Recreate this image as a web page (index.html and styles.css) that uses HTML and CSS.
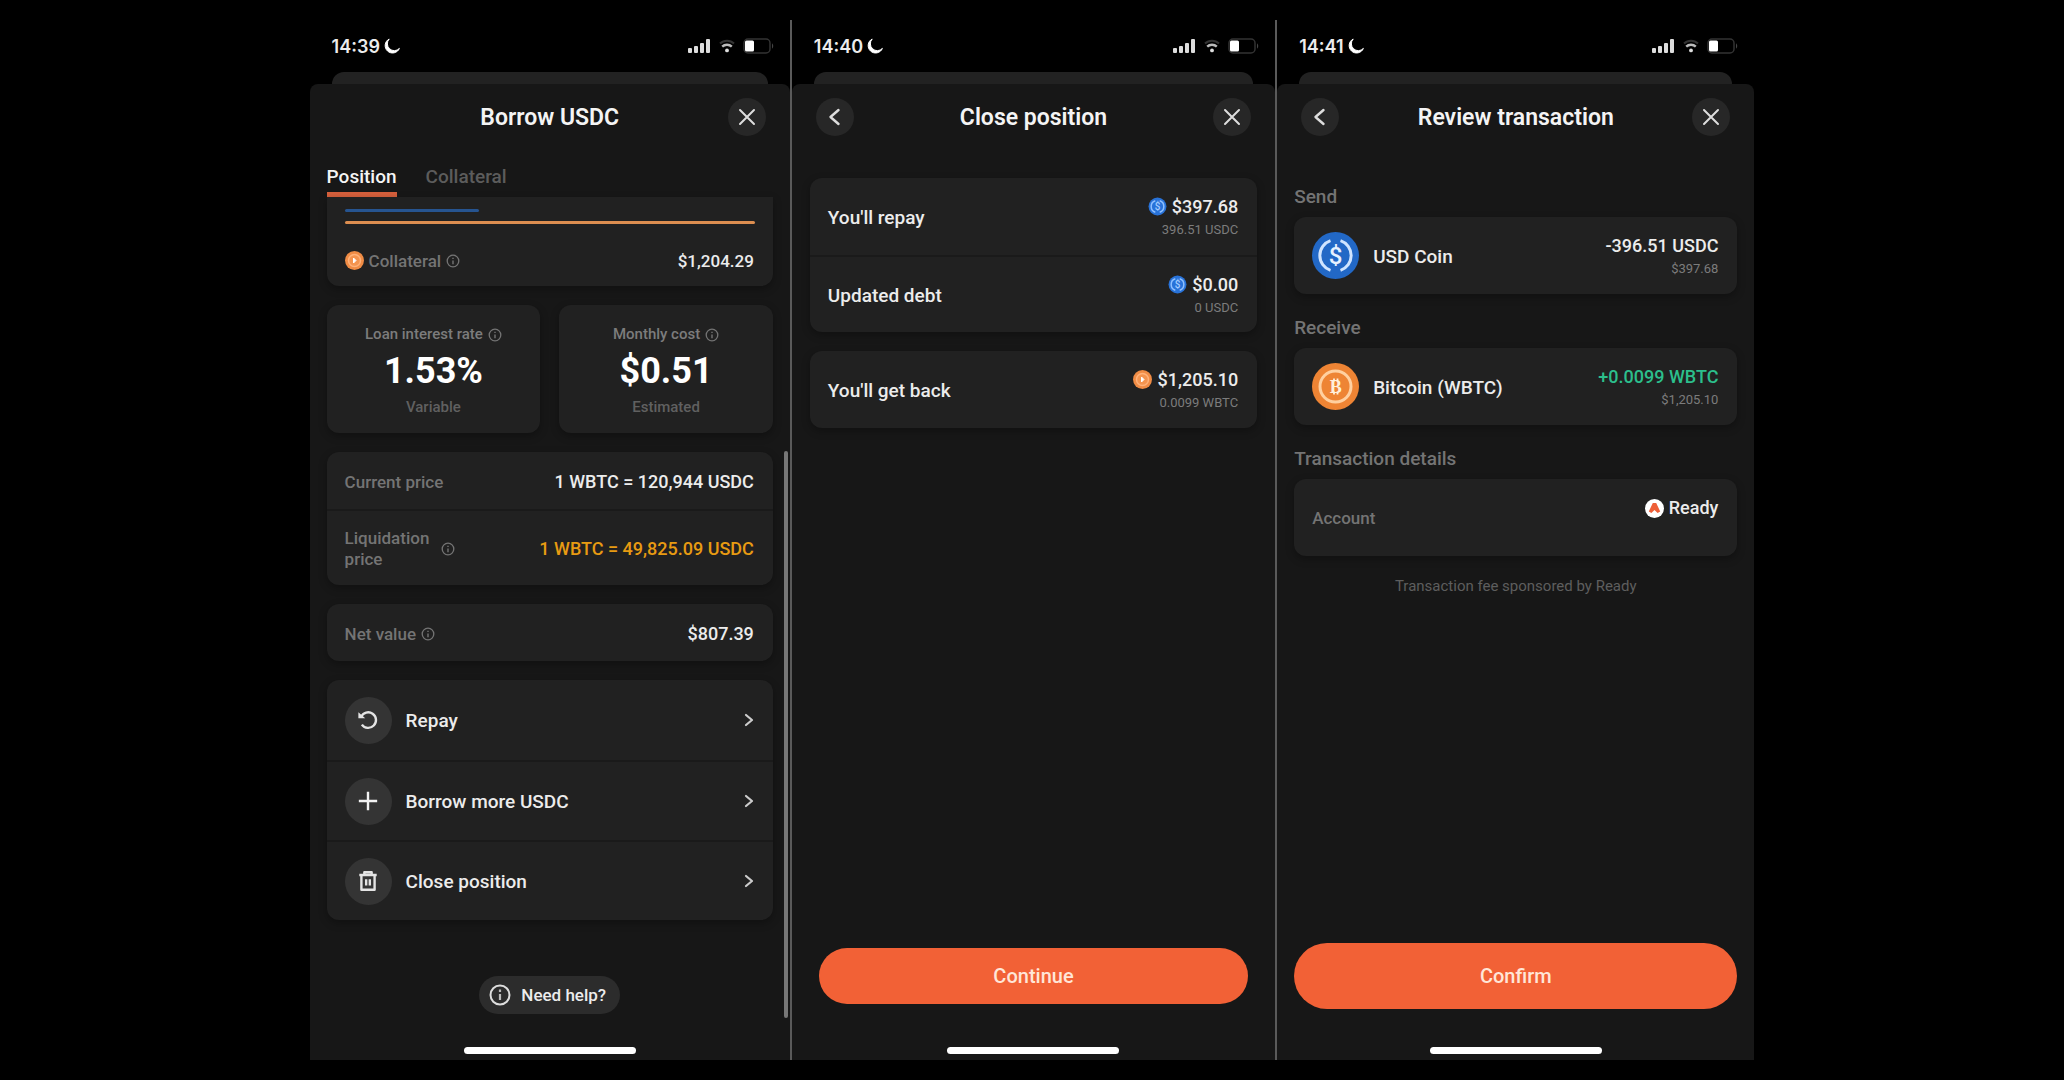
FILE: index.html
```
<!DOCTYPE html>
<html lang="en">
<head>
    <meta charset="UTF-8">
    <meta name="viewport" content="width=device-width, initial-scale=1.0">
    <title>Borrow USDC</title>
    <link rel="stylesheet" href="styles.css">
</head>
<body>
    <!-- Shared icons -->
    <svg class="sprite" aria-hidden="true">
        <symbol id="moon" viewBox="0 0 16 16">
            <path d="M5.2 1A7.4 7.4 0 1 0 15.4 10.400 5.800 5.800 0 0 1 5.200 1z" fill="#fff" stroke="#fff" stroke-width="1" stroke-linejoin="round"/>
        </symbol>
        <symbol id="signal" viewBox="0 0 23 14">
            <g fill="#ddd">
                <rect x="0" y="9" width="4" height="5" rx="1"/>
                <rect x="6" y="7" width="4" height="7" rx="1"/>
                <rect x="12" y="4" width="4" height="10" rx="1"/>
                <rect x="18" y="0" width="4" height="14" rx="1"/>
            </g>
        </symbol>
        <symbol id="wifi" viewBox="0 0 16 14">
            <path d="M1 4.5a10 10 0 0 1 14 0" fill="none" stroke="#333" stroke-width="2"/>
            <path d="M3.2 7.6a7 7 0 0 1 9.6 0" fill="none" stroke="#bbb" stroke-width="2.4"/>
            <circle cx="8" cy="11.4" r="1.9" fill="#ddd"/>
        </symbol>
        <symbol id="battery" viewBox="0 0 31 16">
            <rect x="1" y="1" width="26" height="14" rx="4" fill="none" stroke="#333" stroke-width="1.5"/>
            <path d="M29 5.5c1.6.6 1.6 4.4 0 5z" fill="#444"/>
            <rect x="2" y="2.5" width="9" height="11" rx="1.5" fill="#fff"/>
        </symbol>
        <symbol id="close" viewBox="0 0 18 18">
            <path d="M2 2l14 14M16 2L2 16" fill="none" stroke="#ddd" stroke-width="2" stroke-linecap="round"/>
        </symbol>
        <symbol id="back" viewBox="0 0 18 18">
            <path d="M12.5 2L4.5 9l8 7" fill="none" stroke="#ddd" stroke-width="2.4" stroke-linecap="round" stroke-linejoin="round"/>
        </symbol>
        <symbol id="chevron" viewBox="0 0 10 14">
            <path d="M2 2l6 5-6 5" fill="none" stroke="#ccc" stroke-width="2.2" stroke-linecap="round" stroke-linejoin="round"/>
        </symbol>
        <symbol id="info" viewBox="0 0 14 14">
            <circle cx="7" cy="7" r="5.8" fill="none" stroke="currentColor" stroke-width="1.3"/>
            <path d="M7 6.4v3.8M7 3.8v1.3" stroke="currentColor" stroke-width="1.4"/>
        </symbol>
        <symbol id="usdc" viewBox="0 0 47 47">
            <circle cx="23.5" cy="23.5" r="23.5" fill="#2268c6"/>
            <path d="M18.5 8.700a15.600 15.600 0 0 0 0 29.600M28.500 8.700a15.600 15.600 0 0 1 0 29.600" fill="none" stroke="#cfe4ff" stroke-width="3"/>
            <text x="23.5" y="32" class="coin-sign" font-size="24" fill="#e6f2ff">$</text>
        </symbol>
        <symbol id="usdc-small" viewBox="0 0 19 19">
            <circle cx="9.5" cy="9.5" r="9" fill="#2872d8"/>
            <path d="M7.3 3.800a6 6 0 0 0 0 11.400M11.700 3.800a6 6 0 0 1 0 11.400" fill="none" stroke="#8fc0ff" stroke-width="1.5"/>
            <text x="9.5" y="13" class="coin-sign" font-size="10" fill="#a5ccff">$</text>
        </symbol>
        <symbol id="wbtc" viewBox="0 0 47 47">
            <circle cx="23.5" cy="23.5" r="23.5" fill="#ee8434"/>
            <circle cx="23.5" cy="23.5" r="15.5" fill="none" stroke="#ffd0a0" stroke-width="3"/>
            <path d="M22 15.500v3M25.500 15.500v3M22 28.500v3M25.500 28.500v3" stroke="#fff0dc" stroke-width="1.8"/>
            <text x="23.7" y="29.5" class="coin-sign coin-serif" font-size="18" fill="#fff0dc">B</text>
        </symbol>
        <symbol id="wbtc-small" viewBox="0 0 19 19">
            <circle cx="9.5" cy="9.5" r="9.5" fill="#f08c45"/>
            <circle cx="9.5" cy="9.5" r="6" fill="#f4944f" stroke="#ffb27a" stroke-width="1.5"/>
            <path d="M8.500 7l2.500 2.500L8.500 12z" fill="#fff" stroke="#fff" stroke-width="1" stroke-linejoin="round"/>
        </symbol>
    </svg>

    <main class="screens">
        <!-- Position -->
        <section class="screen">
            <div class="status-bar">
                <span class="time">14:39</span>
                <svg class="moon"><use href="#moon"/></svg>
                <span class="status-icons">
                    <svg class="signal"><use href="#signal"/></svg>
                    <svg class="wifi"><use href="#wifi"/></svg>
                    <svg class="battery"><use href="#battery"/></svg>
                </span>
            </div>
            <div class="sheet-behind"></div>
            <div class="sheet">
                <header class="sheet-header">
                    <h2>Borrow USDC</h2>
                    <button class="round-btn close-btn" aria-label="Close"><svg><use href="#close"/></svg></button>
                </header>
                <nav class="tabs">
                    <button class="tab active">Position</button>
                    <button class="tab">Collateral</button>
                </nav>

                <div class="content">
                    <div class="card card-cut">
                        <div class="bar debt-bar"></div>
                        <div class="bar collateral-bar"></div>
                        <div class="row collateral-row">
                            <span class="label"><svg class="coin-small"><use href="#wbtc-small"/></svg>Collateral <svg class="info"><use href="#info"/></svg></span>
                            <span class="value small-value">$1,204.29</span>
                        </div>
                    </div>

                    <div class="stats">
                        <div class="card stat">
                            <span class="stat-label">Loan interest rate <svg class="info"><use href="#info"/></svg></span>
                            <strong>1.53%</strong>
                            <span class="stat-note">Variable</span>
                        </div>
                        <div class="card stat">
                            <span class="stat-label">Monthly cost <svg class="info"><use href="#info"/></svg></span>
                            <strong>$0.51</strong>
                            <span class="stat-note">Estimated</span>
                        </div>
                    </div>

                    <div class="card">
                        <div class="row price-row">
                            <span class="label">Current price</span>
                            <span class="value">1 WBTC = 120,944 USDC</span>
                        </div>
                        <div class="row price-row liquidation">
                            <span class="label"><span class="wrap-label">Liquidation price</span><svg class="info"><use href="#info"/></svg></span>
                            <span class="value warning">1 WBTC = 49,825.09 USDC</span>
                        </div>
                    </div>

                    <div class="card">
                        <div class="row price-row">
                            <span class="label">Net value <svg class="info"><use href="#info"/></svg></span>
                            <span class="value">$807.39</span>
                        </div>
                    </div>

                    <div class="card">
                        <button class="row action">
                            <span class="action-icon">
                                <svg viewBox="0 0 24 24"><path d="M4.500 8.500a8.500 8.500 0 1 1 .8 8.500" fill="none" stroke="#e4e4e4" stroke-width="2.6"/><path d="M1.500 3.500l7.500 6.500H1.500z" fill="#e4e4e4"/></svg>
                            </span>
                            <span>Repay</span>
                            <svg class="chevron"><use href="#chevron"/></svg>
                        </button>
                        <button class="row action">
                            <span class="action-icon">
                                <svg viewBox="0 0 24 24"><path d="M12 2v20M2 12h20" stroke="#f2f2f2" stroke-width="2.6"/></svg>
                            </span>
                            <span>Borrow more USDC</span>
                            <svg class="chevron"><use href="#chevron"/></svg>
                        </button>
                        <button class="row action">
                            <span class="action-icon">
                                <svg viewBox="0 0 24 24"><path d="M2.500 5.500h19M8 5V2.500h8V5M4.800 6v15.500h14.400V6M10 10v7M14 10v7" fill="none" stroke="#e4e4e4" stroke-width="2.6" stroke-linejoin="round"/></svg>
                            </span>
                            <span>Close position</span>
                            <svg class="chevron"><use href="#chevron"/></svg>
                        </button>
                    </div>
                </div>

                <div class="scrollbar"></div>
                <div class="sheet-footer help-footer">
                    <button class="help-btn"><svg viewBox="0 0 22 22"><circle cx="11" cy="11" r="9.5" fill="none" stroke="#ddd" stroke-width="2"/><path d="M11 10v6M11 5.500v2.500" stroke="#bbb" stroke-width="2.2"/></svg>Need help?</button>
                </div>
                <div class="home-bar"></div>
            </div>
        </section>

        <div class="divider"></div>

        <!-- Close position -->
        <section class="screen">
            <div class="status-bar">
                <span class="time">14:40</span>
                <svg class="moon"><use href="#moon"/></svg>
                <span class="status-icons">
                    <svg class="signal"><use href="#signal"/></svg>
                    <svg class="wifi"><use href="#wifi"/></svg>
                    <svg class="battery"><use href="#battery"/></svg>
                </span>
            </div>
            <div class="sheet-behind"></div>
            <div class="sheet">
                <header class="sheet-header">
                    <button class="round-btn" aria-label="Back"><svg><use href="#back"/></svg></button>
                    <h2>Close position</h2>
                    <button class="round-btn close-btn" aria-label="Close"><svg><use href="#close"/></svg></button>
                </header>

                <div class="content close-content">
                    <div class="card">
                        <div class="row amount-row">
                            <span class="name">You'll repay</span>
                            <span class="amount">
                                <span class="value"><svg class="coin-small"><use href="#usdc-small"/></svg>$397.68</span>
                                <small>396.51 USDC</small>
                            </span>
                        </div>
                        <div class="row amount-row">
                            <span class="name">Updated debt</span>
                            <span class="amount">
                                <span class="value"><svg class="coin-small"><use href="#usdc-small"/></svg>$0.00</span>
                                <small>0 USDC</small>
                            </span>
                        </div>
                    </div>
                    <div class="card">
                        <div class="row amount-row">
                            <span class="name">You'll get back</span>
                            <span class="amount">
                                <span class="value"><svg class="coin-small"><use href="#wbtc-small"/></svg>$1,205.10</span>
                                <small>0.0099 WBTC</small>
                            </span>
                        </div>
                    </div>
                </div>

                <div class="sheet-footer continue-footer">
                    <button class="primary-btn">Continue</button>
                </div>
                <div class="home-bar"></div>
            </div>
        </section>

        <div class="divider"></div>

        <!-- Review transaction -->
        <section class="screen">
            <div class="status-bar">
                <span class="time">14:41</span>
                <svg class="moon"><use href="#moon"/></svg>
                <span class="status-icons">
                    <svg class="signal"><use href="#signal"/></svg>
                    <svg class="wifi"><use href="#wifi"/></svg>
                    <svg class="battery"><use href="#battery"/></svg>
                </span>
            </div>
            <div class="sheet-behind"></div>
            <div class="sheet">
                <header class="sheet-header">
                    <button class="round-btn" aria-label="Back"><svg><use href="#back"/></svg></button>
                    <h2>Review transaction</h2>
                    <button class="round-btn close-btn" aria-label="Close"><svg><use href="#close"/></svg></button>
                </header>

                <div class="content review-content">
                    <h3>Send</h3>
                    <div class="card">
                        <div class="row amount-row">
                            <svg class="coin"><use href="#usdc"/></svg>
                            <span class="name">USD Coin</span>
                            <span class="amount">
                                <span class="value">-396.51 USDC</span>
                                <small>$397.68</small>
                            </span>
                        </div>
                    </div>
                    <h3>Receive</h3>
                    <div class="card">
                        <div class="row amount-row">
                            <svg class="coin"><use href="#wbtc"/></svg>
                            <span class="name">Bitcoin (WBTC)</span>
                            <span class="amount">
                                <span class="value positive">+0.0099 WBTC</span>
                                <small>$1,205.10</small>
                            </span>
                        </div>
                    </div>
                    <h3>Transaction details</h3>
                    <div class="card">
                        <div class="row amount-row account-row">
                            <span class="label">Account</span>
                            <span class="amount">
                                <span class="value"><svg class="coin-small" viewBox="0 0 19 19"><circle cx="9.5" cy="9.5" r="9.5" fill="#fff"/><path d="M7.800 4h3.400l4 8.500-2.600 1.500-3.100-3-3.100 3-2.600-1.500z" fill="#ee5f38"/></svg>Ready</span>
                            </span>
                        </div>
                    </div>
                    <p class="fee-note">Transaction fee sponsored by Ready</p>
                </div>

                <div class="sheet-footer">
                    <button class="primary-btn large">Confirm</button>
                </div>
                <div class="home-bar"></div>
            </div>
        </section>
    </main>
</body>
</html>
```
FILE: styles.css
```
* {
    box-sizing: border-box;
}
body {
    margin: 0;
    padding: 20px 15%;
    min-height: 100vh;
    display: flex;
    background: #000;
    color: #ececec;
    font-family: Roboto, "Liberation Sans", sans-serif;
    font-weight: 500;
}
button {
    border: none;
    padding: 0;
    background: none;
    color: inherit;
    font: inherit;
    cursor: pointer;
}
svg {
    flex: none;
}
.sprite {
    display: none;
}
.coin-sign {
    font-family: Roboto, sans-serif;
    font-weight: 500;
    text-anchor: middle;
}
.coin-serif {
    font-family: "Liberation Serif", serif;
    font-weight: 700;
}

.screens {
    flex: 1;
    display: grid;
    grid-template-columns: 160fr 2px 161fr 2px 159fr;
}
.divider {
    background: #5a5a5a;
}
.screen {
    display: flex;
    flex-direction: column;
    min-width: 0;
}

/* Status bar */
.status-bar {
    display: flex;
    align-items: center;
    height: 52px;
    padding: 0 16px 0 22px;
}
.time {
    font-family: Inter, sans-serif;
    font-size: 18px;
    font-weight: 600;
}
.moon {
    width: 16px;
    height: 16px;
    margin-left: 4px;
}
.status-icons {
    display: flex;
    align-items: center;
    gap: 8px;
    margin-left: auto;
}
.signal {
    width: 23px;
    height: 14px;
}
.wifi {
    width: 16px;
    height: 14px;
}
.battery {
    width: 31px;
    height: 16px;
}

/* Sheet */
.sheet-behind {
    height: 12px;
    margin: 0 22px;
    border-radius: 12px 12px 0 0;
    background: #222;
}
.sheet {
    position: relative;
    flex: 1;
    display: flex;
    flex-direction: column;
    padding: 0 17px 6px;
    border-radius: 8px 8px 0 0;
    background: #171717;
}
.sheet-header {
    display: grid;
    grid-template-columns: 38px 1fr 38px;
    align-items: center;
    padding: 14px 7px 0;
}
.sheet-header h2 {
    grid-column: 2;
    margin: 0;
    padding-top: 2px;
    font-size: 23px;
    font-weight: 600;
    line-height: 36px;
    text-align: center;
    color: #f4f4f4;
}
.round-btn {
    display: flex;
    align-items: center;
    justify-content: center;
    width: 38px;
    height: 38px;
    border-radius: 50%;
    background: #272727;
}
.close-btn {
    grid-column: 3;
}
.round-btn svg {
    width: 18px;
    height: 18px;
}
.home-bar {
    width: 172px;
    height: 7px;
    margin: 0 auto;
    border-radius: 4px;
    background: #fff;
}

/* Tabs */
.tabs {
    display: flex;
    gap: 29px;
    margin-top: 26px;
}
.tab {
    height: 35px;
    padding-bottom: 1px;
    border-bottom: 5px solid transparent;
    font-size: 19px;
    line-height: 29px;
    color: #5c5c5c;
}
.tab.active {
    border-color: #d6603c;
    color: #f4f4f4;
}

/* Cards */
.content {
    display: flex;
    flex-direction: column;
    gap: 19px;
}
.card {
    border-radius: 12px;
    background: #212121;
    box-shadow: 0 3px 8px rgba(0, 0, 0, 0.3);
}
.card-cut {
    padding-top: 12px;
    border-radius: 0 0 12px 12px;
}
.bar {
    margin: 0 18px;
    height: 3px;
    border-radius: 2px;
}
.debt-bar {
    width: 134px;
    background: #265490;
}
.collateral-bar {
    margin-top: 9px;
    background: #dd8e50;
}
.row {
    display: flex;
    align-items: center;
    justify-content: space-between;
    width: 100%;
    padding: 0 19px 0 18px;
    font-size: 18px;
}
.row + .row {
    border-top: 2px solid #1a1a1a;
}
.collateral-row {
    height: 62px;
    padding-top: 11px;
}
.label {
    display: flex;
    align-items: center;
    gap: 5px;
    font-size: 17px;
    color: #747474;
}
.info {
    width: 14px;
    height: 14px;
    color: #747474;
}
.value {
    display: flex;
    align-items: center;
    gap: 5px;
    line-height: 24px;
}
.small-value {
    font-size: 17px;
}
.warning {
    color: #e89b12;
}
.positive {
    color: #2cbf8c;
}
.coin-small {
    width: 19px;
    height: 19px;
}
.price-row {
    height: 57px;
    padding-top: 2px;
}
.liquidation {
    height: 76px;
}
.wrap-label {
    width: 91px;
    line-height: 21px;
}

.stats {
    display: grid;
    grid-template-columns: 1fr 1fr;
    gap: 19px;
}
.stat {
    display: flex;
    flex-direction: column;
    align-items: center;
    padding: 19px 0 16px;
}
.stat-label {
    display: flex;
    align-items: center;
    gap: 5px;
    font-size: 15px;
    line-height: 21px;
    color: #7c7c7c;
}
.stat strong {
    font-size: 36px;
    font-weight: 700;
    line-height: 53px;
    color: #fff;
}
.stat-note {
    font-size: 15px;
    line-height: 19px;
    color: #606060;
}

/* Actions */
.action {
    gap: 14px;
    height: 80px;
    font-size: 19px;
    text-align: left;
}
.action-icon {
    display: flex;
    align-items: center;
    justify-content: center;
    width: 47px;
    height: 47px;
    border-radius: 50%;
    background: #343434;
}
.action-icon svg {
    width: 22px;
    height: 22px;
}
.chevron {
    width: 10px;
    height: 14px;
    margin-left: auto;
}

/* Amounts */
.close-content {
    margin-top: 42px;
    padding: 0 1px;
}
.amount-row {
    gap: 14px;
    height: 77px;
}
.name {
    padding-top: 2px;
    font-size: 19px;
}
.coin {
    width: 47px;
    height: 47px;
}
.amount {
    display: flex;
    flex-direction: column;
    align-items: flex-end;
    margin-left: auto;
    padding-top: 2px;
}
.amount small {
    font-size: 13px;
    line-height: 22px;
    font-weight: 400;
    color: #7c7c7c;
}
.account-row .amount {
    align-self: flex-start;
    margin-top: 15px;
}
.review-content {
    gap: 0;
    margin-top: 47px;
}
.review-content h3 {
    margin: 0 0 6px;
    font-size: 19px;
    font-weight: 500;
    line-height: 28px;
    color: #747474;
}
.review-content .card + h3 {
    margin-top: 20px;
}
.fee-note {
    margin: 20px 0 0;
    font-size: 15px;
    font-weight: 400;
    line-height: 20px;
    text-align: center;
    color: #5e5e5e;
}

/* Footer */
.sheet-footer {
    display: flex;
    justify-content: center;
    margin-top: auto;
    padding-bottom: 38px;
}
.help-footer {
    padding-bottom: 33px;
}
.continue-footer {
    padding: 0 10px 43px;
}
.help-btn {
    display: flex;
    align-items: center;
    gap: 10px;
    height: 38px;
    padding: 0 14px 0 10px;
    border-radius: 19px;
    background: #2c2c2c;
    font-size: 17px;
}
.help-btn svg {
    width: 22px;
    height: 22px;
}
.primary-btn {
    width: 100%;
    height: 56px;
    border-radius: 33px;
    background: #f26136;
    color: #ffe6d8;
    font-size: 20px;
}
.primary-btn.large {
    height: 66px;
}
.scrollbar {
    position: absolute;
    right: 2px;
    top: 367px;
    bottom: 42px;
    width: 4px;
    border-radius: 2px;
    background: #777;
}
```
